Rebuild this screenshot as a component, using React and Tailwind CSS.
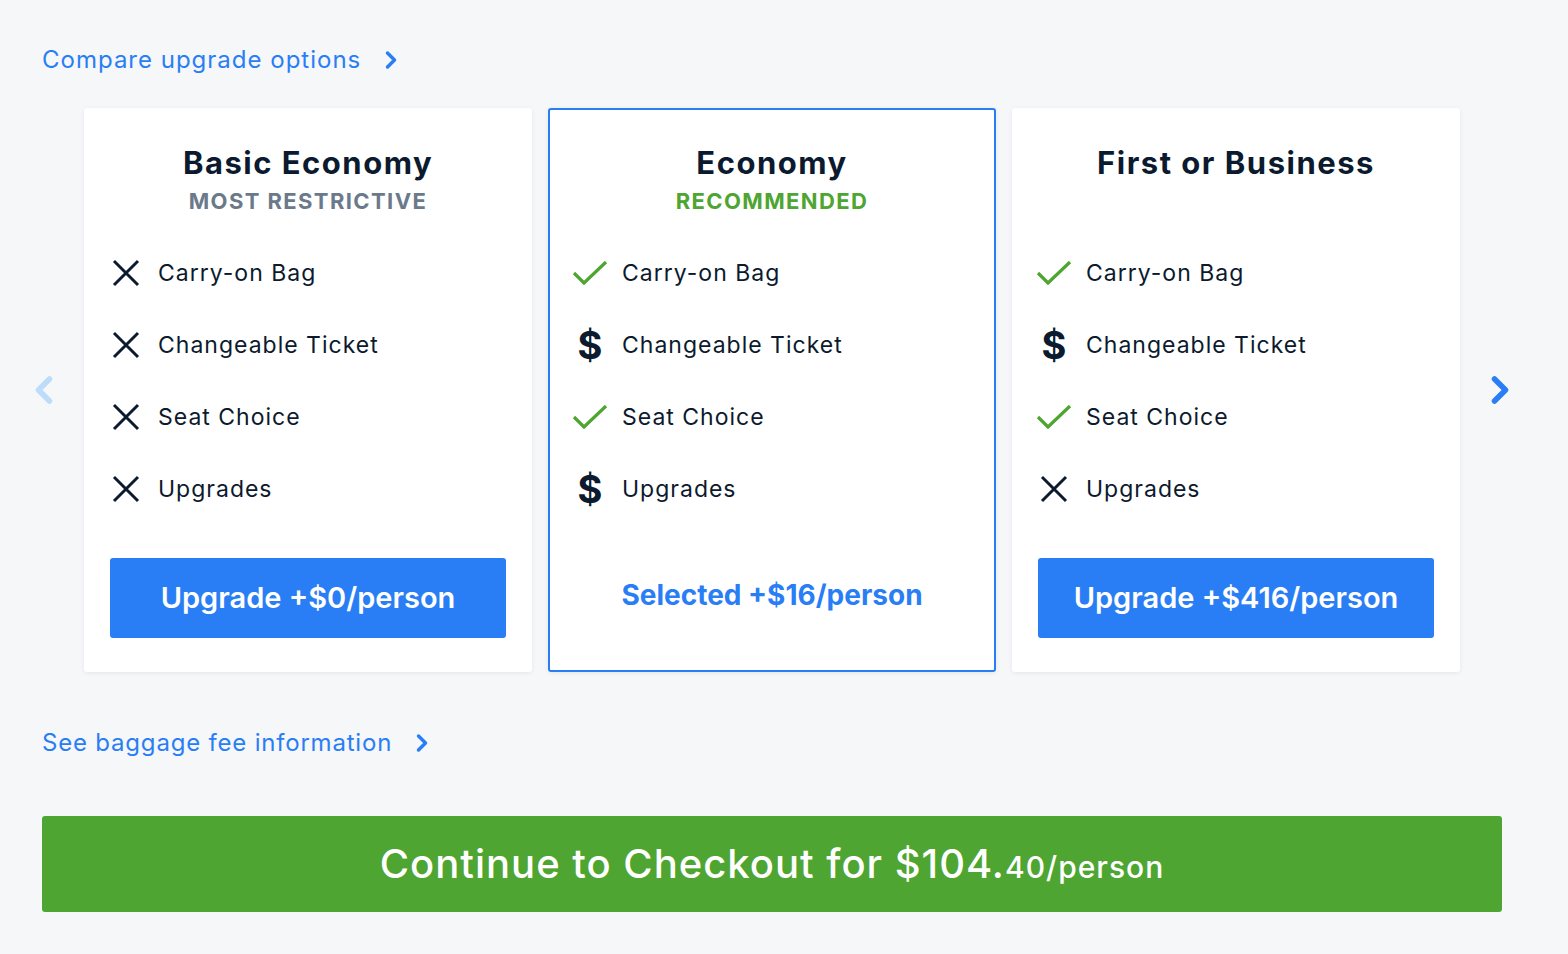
import { ChevronRight, ChevronLeft } from 'lucide-react'

const FONT = { fontFamily: 'Inter, "DejaVu Sans", sans-serif' }

const PLANS = [
  {
    name: 'Basic Economy', tag: 'MOST RESTRICTIVE', tagCls: 'text-[#6b7a8a]',
    feats: ['x', 'x', 'x', 'x'], cta: 'Upgrade +$0/person',
  },
  {
    name: 'Economy', tag: 'RECOMMENDED', tagCls: 'text-[#4ea531]',
    feats: ['check', 'dollar', 'check', 'dollar'], cta: 'Selected +$16/person', selected: true,
  },
  {
    name: 'First or Business', tag: '',
    feats: ['check', 'dollar', 'check', 'x'], cta: 'Upgrade +$416/person',
  },
]
const LABELS = ['Carry-on Bag', 'Changeable Ticket', 'Seat Choice', 'Upgrades']

function Icon({ kind }) {
  if (kind === 'x') return (
    <svg width="28" height="28" viewBox="0 0 28 28" className="text-[#0c1a2e]">
      <path d="M2 2 L26 26 M26 2 L2 26" stroke="currentColor" strokeWidth="3" fill="none"/>
    </svg>
  )
  if (kind === 'check') return (
    <svg width="36" height="26" viewBox="0 0 36 26" className="text-[#4ea531]">
      <path d="M2 13 L12 23 L34 2" stroke="currentColor" strokeWidth="3.2" fill="none"/>
    </svg>
  )
  return <span className="text-[38px] font-bold leading-none text-[#0c1a2e]">$</span>
}

function Card({ p }) {
  return (
    <div className={`flex-1 bg-white rounded-[3px] shadow-[0_1px_4px_rgba(20,40,80,0.08)] flex flex-col items-center h-[564px] ${p.selected ? 'border-2 border-[#2a7ef5]' : 'border-2 border-transparent'}`}>
      <h2 className="mt-[32px] text-[31px] font-bold leading-[42px] tracking-[1.5px] text-[#0b1a2e]">{p.name}</h2>
      <div className={`h-[38px] -mt-[2px] text-[22px] font-bold leading-[38px] tracking-[1.4px] ${p.tagCls || ''}`}>{p.tag}</div>
      <ul className="self-stretch mt-[17px] pl-[20px] flex flex-col">
        {p.feats.map((f, i) => (
          <li key={i} className="h-[72px] flex items-center">
            <div className="w-[40px] flex justify-center"><Icon kind={f}/></div>
            <span className="ml-[12px] text-[23px] tracking-[1px] text-[#0c1a2e]">{LABELS[i]}</span>
          </li>
        ))}
      </ul>
      {p.selected ? (
        <div className="mt-[49px] h-[80px] flex items-start justify-center text-[#2a7ef5] text-[28px] font-bold">{p.cta}</div>
      ) : (
        <button className="mt-[33px] w-[396px] h-[80px] rounded-[3px] bg-[#2a7ef5] text-white text-[29px] font-semibold">{p.cta}</button>
      )}
    </div>
  )
}

export default function App() {
  return (
    <div className="min-h-screen bg-[#f6f7f9] pl-[42px] pt-[44px]" style={FONT}>
      <div className="w-[1460px]">
        <a className="flex items-center gap-[16px] text-[24px] tracking-[1px] text-[#2a7ef5] h-[32px]">
          Compare upgrade options <ChevronRight size={28} strokeWidth={3}/>
        </a>

        <div className="mt-[32px] -mx-[22px] flex items-center gap-4">
          <div className="w-12 flex justify-center text-[#bcdcfb]"><ChevronLeft size={44} strokeWidth={3}/></div>
          <div className="flex-1 flex gap-4">
            {PLANS.map(p => <Card key={p.name} p={p}/>)}
          </div>
          <div className="w-12 flex justify-center text-[#2a7ef5]"><ChevronRight size={44} strokeWidth={3}/></div>
        </div>

        <a className="mt-[55px] flex items-center gap-[16px] text-[24px] tracking-[0.8px] text-[#2a7ef5] h-[32px]">
          See baggage fee information <ChevronRight size={28} strokeWidth={3}/>
        </a>

        <button className="mt-[57px] w-full h-[96px] rounded-[3px] bg-[#4ea531] text-white flex items-baseline justify-center pt-[18px]">
          <span className="text-[40px] font-medium tracking-[1px]">Continue to Checkout for $104.</span>
          <span className="text-[30px] font-medium tracking-[1px]">40/person</span>
        </button>
      </div>
    </div>
  )
}
